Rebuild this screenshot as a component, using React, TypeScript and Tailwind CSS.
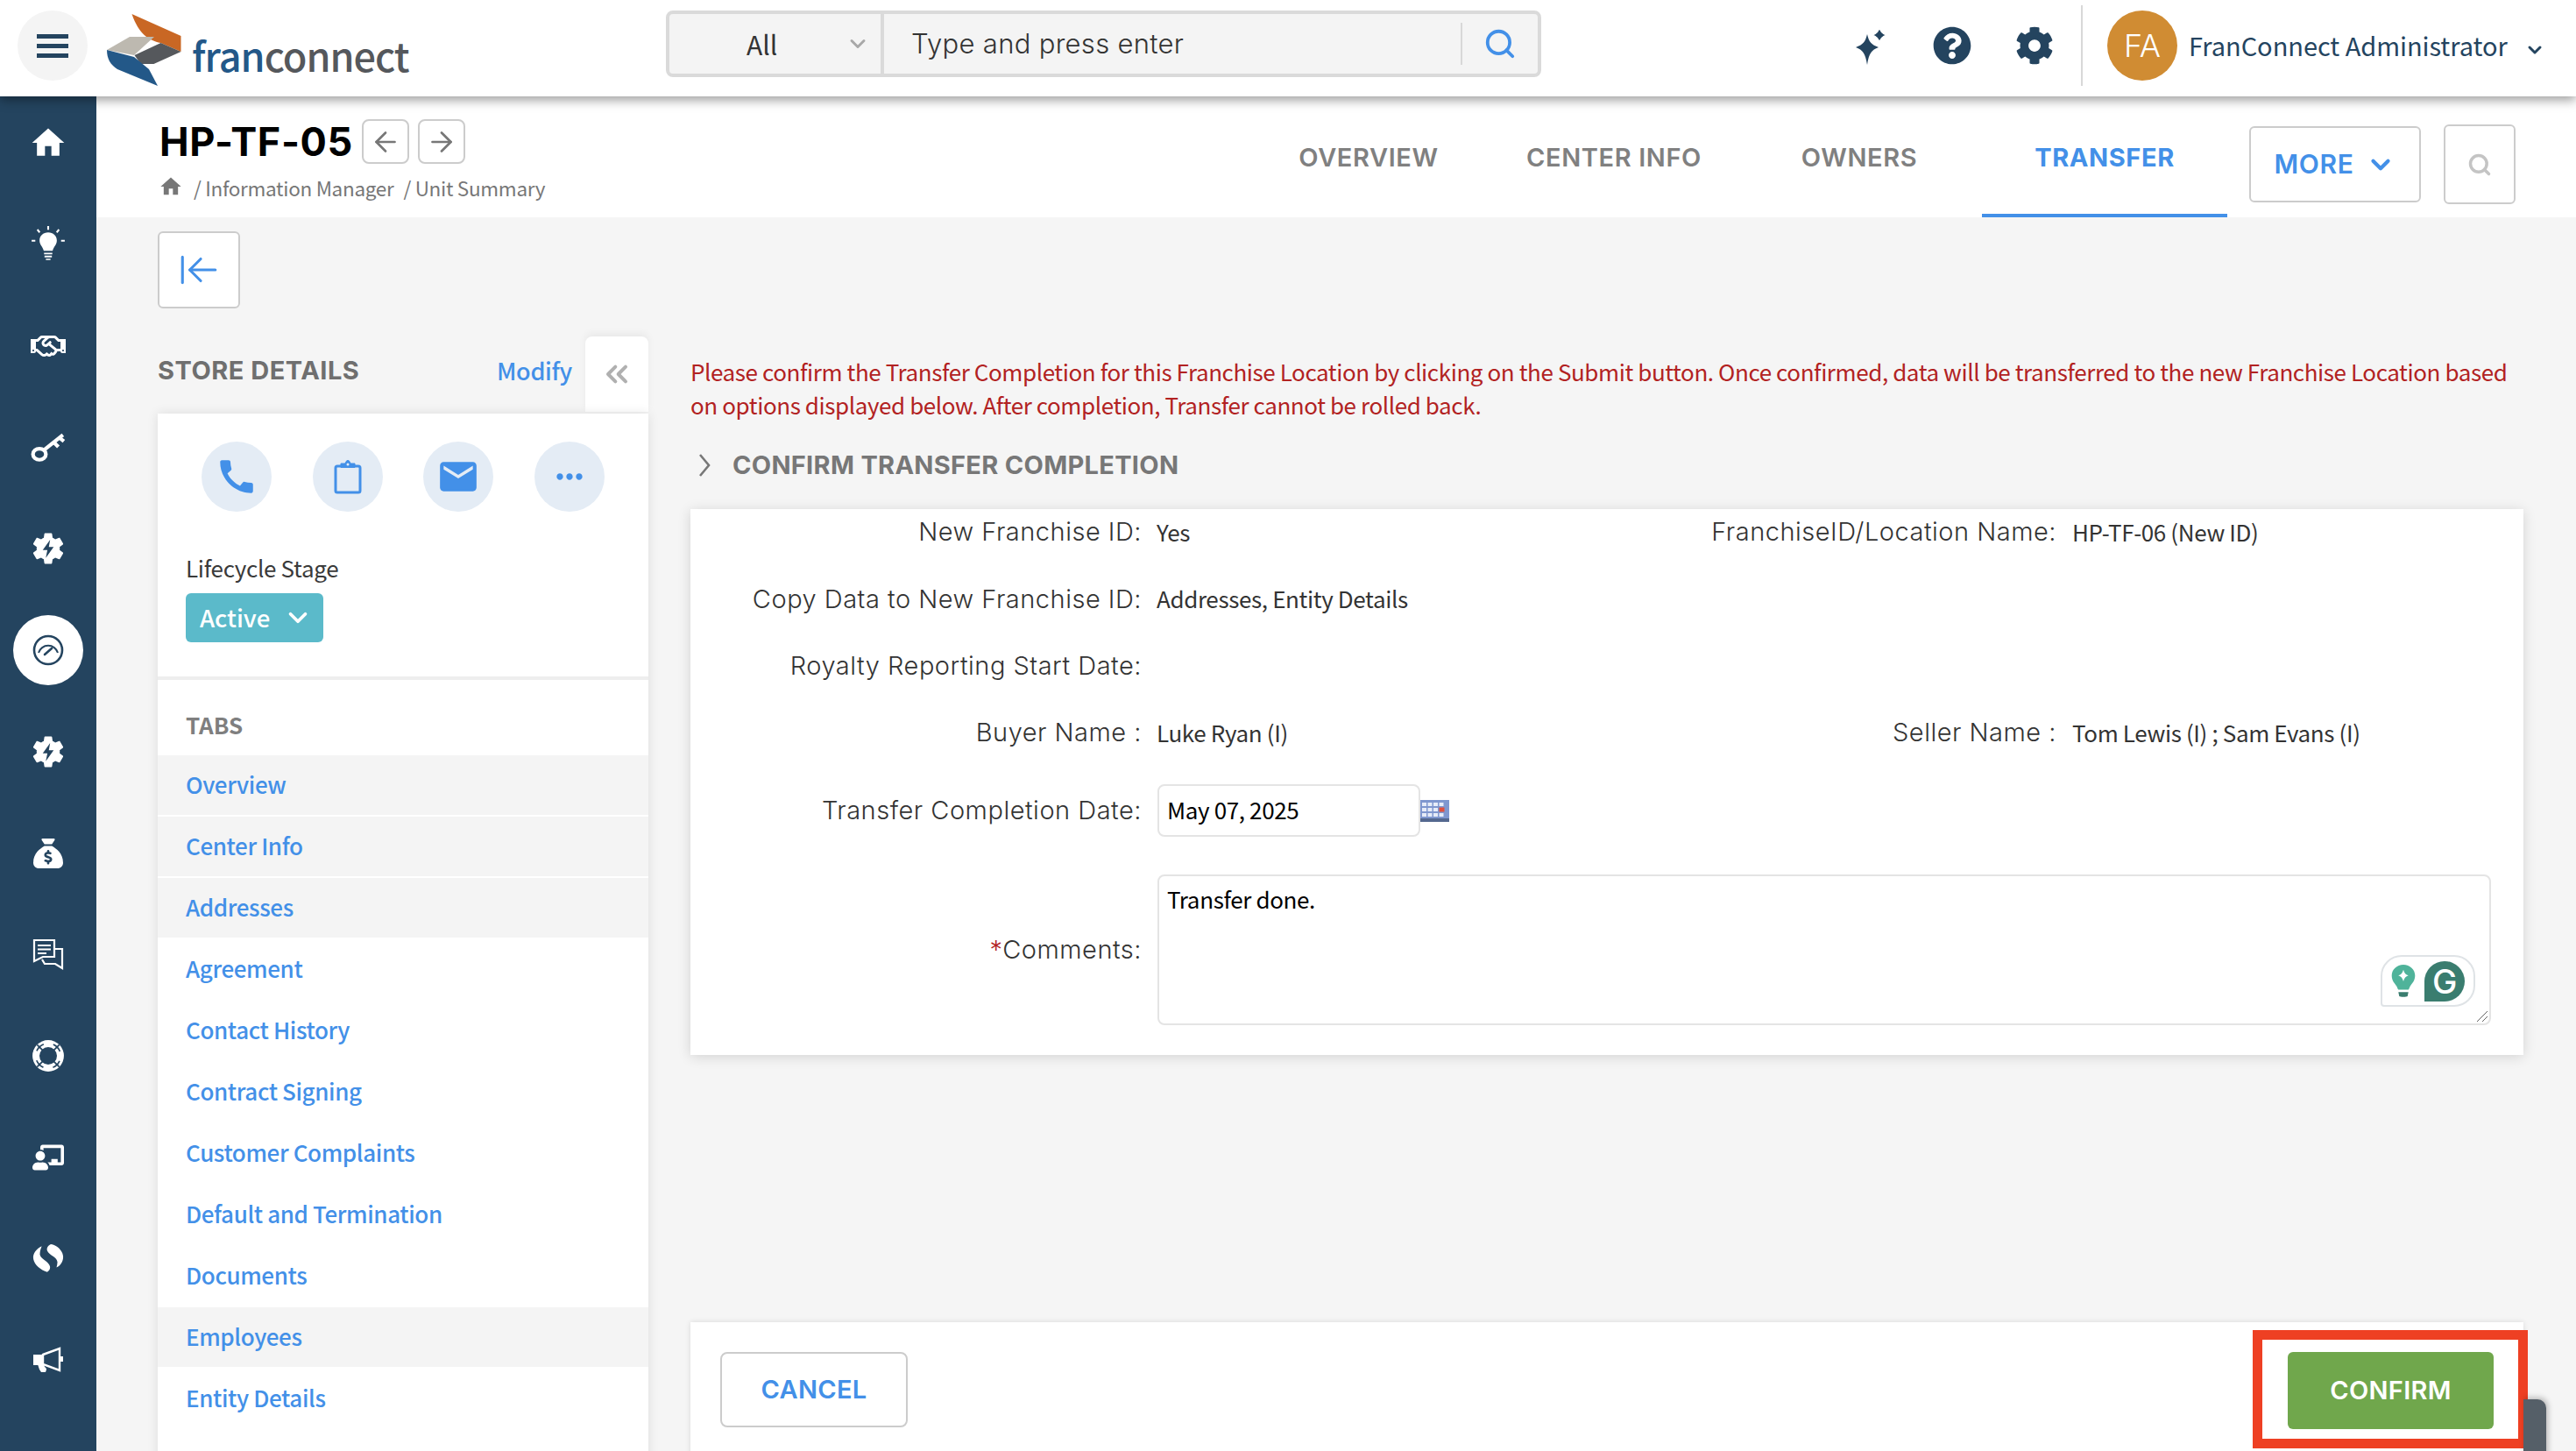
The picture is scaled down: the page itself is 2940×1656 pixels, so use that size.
import { ArrowLeft, ArrowLeftToLine, ArrowRight, ChevronDown, ChevronsLeft, Search } from "lucide-react";
import { FaChalkboardTeacher, FaCog, FaQuestionCircle, FaRegHandshake } from "react-icons/fa";
import { FaSackDollar } from "react-icons/fa6";
import { MdCall, MdEmail, MdHome, MdMoreHoriz } from "react-icons/md";

const source = "font-['Noto_Sans_CJK_SC','Source_Sans_3',sans-serif]";
const mont = "font-['Inter',sans-serif]";

const gearPath =
  "M19.14 12.94c.04-.3.06-.61.06-.94 0-.32-.02-.64-.07-.94l2.03-1.58c.18-.14.23-.41.12-.61l-1.92-3.32c-.12-.22-.37-.29-.59-.22l-2.39.96c-.5-.38-1.03-.7-1.62-.94l-.36-2.54c-.04-.24-.24-.41-.48-.41h-3.84c-.24 0-.43.17-.47.41l-.36 2.54c-.59.24-1.13.57-1.62.94l-2.39-.96c-.22-.08-.47 0-.59.22L2.74 8.87c-.12.21-.08.47.12.61l2.03 1.58c-.05.3-.09.63-.09.94s.02.64.07.94l-2.03 1.58c-.18.14-.23.41-.12.61l1.92 3.32c.12.22.37.29.59.22l2.39-.96c.5.38 1.03.7 1.62.94l.36 2.54c.05.24.24.41.48.41h3.84c.24 0 .44-.17.47-.41l.36-2.54c.59-.24 1.13-.56 1.62-.94l2.39.96c.22.08.47 0 .59-.22l1.92-3.32c.12-.22.07-.47-.12-.61l-2.01-1.58z";

function BoltGear() {
  return (
    <svg viewBox="0 0 24 24" className="w-[44px] h-[44px]">
      <path d={gearPath} fill="#fff" />
      <path d="M13.200 6.500 8.600 13h2.900l-1 4.800 4.900-6.800h-3z" fill="#24445f" />
    </svg>
  );
}

function Bulb() {
  return (
    <svg viewBox="0 0 36 40" className="w-[38px] h-[42px]" fill="#fff">
      <path d="M18 7c-5.500 0-9.400 3.800-9.400 8.600 0 4.600 3.600 6.800 4.600 11.400h9.600c1-4.600 4.600-6.800 4.600-11.400C27.400 10.800 23.500 7 18 7z" />
      <path d="M13.500 29h9v1.800h-9zM14 32.200h8V34h-8zM15.500 35.400h5V37h-5z" />
      <path d="M17 0h2v4h-2zM0 15h4v2H0zM32 15h4v2h-4z" />
      <path d="m5.500 4.500 1.500-1.300 2.500 3-1.500 1.300zM30.500 4.500 29 3.200l-2.500 3 1.500 1.300z" />
    </svg>
  );
}

function KeyIcon() {
  return (
    <svg viewBox="0 0 38 36" className="w-[40px] h-[38px]" fill="none" stroke="#fff" strokeWidth="4">
      <ellipse cx="9.500" cy="26" rx="7" ry="6" />
      <path d="M15 21 35 5" />
      <path d="m25 13 5 5M31 8l5 4" />
    </svg>
  );
}

function ChatIcon() {
  return (
    <svg viewBox="0 0 36 36" className="w-[36px] h-[36px]" fill="none" stroke="#fff" strokeWidth="2.200">
      <path d="M2 2h23v19H12l-10 5z" />
      <path d="M6 8h15M6 12.500h15M6 17h10" strokeWidth="1.800" />
      <path d="M25 12h9v22l-8-5H14l-3-5" />
    </svg>
  );
}

function RingIcon() {
  return (
    <svg viewBox="0 0 36 36" className="w-[38px] h-[38px]">
      <circle cx="18" cy="18" r="17" fill="#fff" />
      <circle cx="18" cy="18" r="9.500" fill="#24445f" />
      <circle cx="18" cy="18" r="13.500" fill="none" stroke="#24445f" strokeWidth="1.600" strokeDasharray="10.600 10.600" strokeDashoffset="5.300" transform="rotate(45 18 18)" />
      <path d="m6 6 6 6M30 6l-6 6M6 30l6-6M30 30l-6-6" stroke="#24445f" strokeWidth="1.600" />
    </svg>
  );
}

function SplitCircle() {
  return (
    <svg viewBox="0 0 36 36" className="w-[38px] h-[38px]" fill="#fff">
      <path d="M11 4C5 7 1 12 2 18c1 6 8 12 15 14 3-2 4-5 2-8-3-5-9-6-10-11 0-4 1-6 2-9z" />
      <path d="M21 2c-3 1-5 4-4 7 2 5 10 6 11 12 0 2-.500 4-1 6 5-2 8-8 7-13-1-6-7-11-13-12z" />
    </svg>
  );
}

function Megaphone() {
  return (
    <svg viewBox="0 0 38 36" className="w-[38px] h-[36px]">
      <path d="M2 11h11v12H2z" fill="#fff" />
      <path d="M7 22h7l1 3c2 1 2 3 2 3l-1 3h-5l-2-3z" fill="#fff" />
      <path d="m13 11 19-7v25l-19-7z" fill="none" stroke="#fff" strokeWidth="2.400" />
      <path d="M32 13h4v6h-4z" fill="#fff" />
    </svg>
  );
}

function GaugeIcon() {
  return (
    <svg viewBox="0 0 36 36" className="w-[36px] h-[36px]" fill="none" stroke="#24445f">
      <circle cx="18" cy="18" r="16" strokeWidth="2.600" />
      <path d="M7 21a11.500 11.500 0 0 1 22 0" strokeWidth="2" />
      <path d="m14 23 8-7" strokeWidth="2.600" strokeLinecap="round" />
    </svg>
  );
}

function Logo() {
  return (
    <svg viewBox="121 17 88 82" className="w-[88px] h-[82px]">
      <path d="M150.500 17 206.500 42v18l-23-10c-14-3-25-10-33-33z" fill="#c96724" />
      <path d="M122 58 148 43h28l-23 21z" fill="#bdb9b0" />
      <path d="M183.500 50 206.500 60l-31 14h-15l-7-10z" fill="#55585c" />
      <path d="M122 58 153 66l17 14 10 19-46-19c-8-5-12-12-12-22z" fill="#235888" />
    </svg>
  );
}

function CalendarIcon() {
  return (
    <svg viewBox="0 0 33 25" className="w-[33px] h-[25px] shrink-0">
      <rect width="33" height="25" fill="#7f97cf" />
      <rect y="21" width="33" height="4" fill="#54688f" />
      <g fill="#e6ecf8">
        <rect x="2" y="3" width="5" height="4" />
        <rect x="8.500" y="3" width="5" height="4" />
        <rect x="15" y="3" width="5" height="4" />
        <rect x="21.500" y="3" width="5" height="4" />
        <rect x="2" y="9" width="5" height="4" />
        <rect x="8.500" y="9" width="5" height="4" />
        <rect x="15" y="9" width="5" height="4" />
        <rect x="2" y="15" width="5" height="4" />
        <rect x="8.500" y="15" width="5" height="4" />
        <rect x="15" y="15" width="5" height="4" />
        <rect x="21.500" y="15" width="5" height="4" />
      </g>
      <rect x="21.500" y="8.500" width="6" height="5" fill="#e0503c" />
    </svg>
  );
}

function Clipboard() {
  return (
    <svg viewBox="0 0 32 40" className="w-[32px] h-[40px]" fill="none" stroke="#4390e8" strokeWidth="3">
      <rect x="2" y="8" width="28" height="30" rx="2" />
      <path d="M8 9.500h16V5h-5c-.500-2-1.500-3.500-3-3.500S13.500 3 13 5H8z" fill="#4390e8" strokeWidth="1" />
      <circle cx="16" cy="6" r="1.500" fill="#e4ecf5" stroke="none" />
    </svg>
  );
}

function Sparkle() {
  return (
    <svg viewBox="0 0 41 43" className="w-[41px] h-[43px] shrink-0" fill="#24445f">
      <path d="M17 8c2 9 5 12 13 15-8 3-11 7-13 20-2-13-5-17-13-20 8-3 11-6 13-15z" />
      <path d="M31 0c1 5 3 7 8 9-5 2-7 4-8 9-1-5-3-7-8-9 5-2 7-4 8-9z" stroke="#fff" strokeWidth="1.500" />
    </svg>
  );
}

const sideIcons = [
  <MdHome key="home" className="w-[44px] h-[44px] text-white" />,
  <Bulb key="bulb" />,
  <FaRegHandshake key="hands" className="w-[40px] h-[40px] text-white" />,
  <KeyIcon key="key" />,
  <BoltGear key="gear" />,
  <GaugeIcon key="gauge" />,
  <BoltGear key="gear2" />,
  <FaSackDollar key="bag" className="w-[34px] h-[38px] text-white" />,
  <ChatIcon key="chat" />,
  <RingIcon key="ring" />,
  <FaChalkboardTeacher key="teach" className="w-[36px] h-[34px] text-white" />,
  <SplitCircle key="split" />,
  <Megaphone key="mega" />,
];

const tabs = [
  { name: "Overview", shaded: true },
  { name: "Center Info", shaded: true },
  { name: "Addresses", shaded: true },
  { name: "Agreement" },
  { name: "Contact History" },
  { name: "Contract Signing" },
  { name: "Customer Complaints" },
  { name: "Default and Termination" },
  { name: "Documents" },
  { name: "Employees", shaded: true },
  { name: "Entity Details" },
];

function Label({ children, className = "" }: { children: React.ReactNode; className?: string }) {
  return <span className={`${mont} text-[29px] tracking-[0.5px] font-light text-[#333] text-right ${className}`}>{children}</span>;
}

function Value({ children, className = "" }: { children?: React.ReactNode; className?: string }) {
  return <span className={`${source} -mt-[2px] text-[26px] tracking-[-0.37px] text-[#333] ${className}`}>{children}</span>;
}

export default function App() {
  return (
    <div className={`w-[2940px] h-[1656px] overflow-hidden flex flex-col bg-[#f5f5f5] ${source}`}>
      {/* Top bar */}
      <header className="relative z-20 h-[110px] shrink-0 bg-white flex items-center whitespace-nowrap shadow-[0_4px_12px_rgba(0,0,0,0.4)]">
        <button className="ml-[20px] w-[80px] h-[80px] shrink-0 -mt-[6px] rounded-full bg-[#f4f4f4] flex flex-col items-center justify-center gap-[6px]">
          <span className="w-[36px] h-[5px] bg-[#24445f]" />
          <span className="w-[36px] h-[5px] bg-[#24445f]" />
          <span className="w-[36px] h-[5px] bg-[#24445f]" />
        </button>
        <div className="ml-[21px] mt-[4px] shrink-0">
          <Logo />
        </div>
        <div className="ml-[10px] mt-[14px] w-[250px] shrink-0 text-[45px] leading-none font-medium tracking-[-1px]">
          <span className="text-[#235888]">fran</span>
          <span className="text-[#55585c]">connect</span>
        </div>
        <div className="ml-[291px] -mt-[10px] w-[999px] h-[76px] shrink-0 flex rounded-[8px] border-4 border-[#dadada] bg-[#f4f4f4]">
          <div className="w-[245px] border-r-4 border-[#dadada] flex items-center">
            <span className="ml-[88px] text-[30px] text-[#333]">All</span>
            <ChevronDown className="ml-[78px] w-[28px] h-[28px] text-[#a8a8a8]" strokeWidth={2.5} />
          </div>
          <div className={`${mont} flex-1 flex items-center pl-[31px] text-[31px] tracking-[0.3px] font-light text-[#333]`}>Type and press enter</div>
          <div className="my-[10px] border-l-2 border-[#d8d8d8] w-[88px] flex items-center justify-center">
            <Search className="w-[38px] h-[38px] text-[#4390e8]" strokeWidth={2.4} />
          </div>
        </div>
        <div className="ml-[355px] -mt-[6px]">
          <Sparkle />
        </div>
        <FaQuestionCircle className="ml-[51px] -mt-[6px] w-[44px] h-[44px] shrink-0 text-[#24445f]" />
        <FaCog className="ml-[50px] -mt-[6px] w-[44px] h-[44px] shrink-0 text-[#24445f]" />
        <div className="ml-[31px] w-[2px] h-[92px] shrink-0 -mt-[6px] bg-[#d8d8d8]" />
        <div className={`${mont} ml-[28px] -mt-[6px] w-[80px] h-[80px] shrink-0 rounded-full bg-[#d08c33] text-white text-[36px] font-light flex items-center justify-center`}>FA</div>
        <span className="ml-[13px] -mt-[6px] text-[29px] tracking-[-0.05px] text-[#24445f]">FranConnect Administrator</span>
        <ChevronDown className="ml-[19px] mt-[4px] w-[24px] h-[24px] shrink-0 text-[#24445f]" strokeWidth={3} />
      </header>

      <div className="flex-1 flex min-h-0">
        {/* Icon rail */}
        <nav className="w-[110px] shrink-0 bg-[#24445f] flex flex-col items-center pt-[13px] gap-[35.8px]">
          {sideIcons.map((icon, i) => (
            <div key={i} className={`w-[80px] h-[80px] shrink-0 rounded-full flex items-center justify-center ${i === 5 ? "bg-white" : ""}`}>
              {icon}
            </div>
          ))}
        </nav>

        <main className="flex-1 flex flex-col min-w-0">
          {/* Title row */}
          <div className="h-[138px] shrink-0 bg-white flex whitespace-nowrap">
            <div className="w-[1312px] shrink-0 pl-[72px] pt-[26px]">
              <div className="flex items-start gap-[10px]">
                <h1 className={`${mont} text-[45px] leading-[52px] font-bold text-black tracking-[0.6px]`}>HP-TF-05</h1>
                <button className="w-[54px] h-[51px] rounded-[8px] border-2 border-[#ccc] flex items-center justify-center">
                  <ArrowLeft className="w-[36px] h-[36px] text-[#777]" strokeWidth={1.8} />
                </button>
                <button className="w-[54px] h-[51px] rounded-[8px] border-2 border-[#ccc] flex items-center justify-center">
                  <ArrowRight className="w-[36px] h-[36px] text-[#777]" strokeWidth={1.8} />
                </button>
              </div>
              <div className="flex items-center mt-[10px] text-[22.500px] tracking-[-0.3px] text-[#777]">
                <MdHome className="w-[28px] h-[28px] text-[#777] -ml-[1px] -mt-[4px]" />
                <span className="ml-[12px]">/ Information Manager</span>
                <span className="ml-[11px]">/ Unit Summary</span>
              </div>
            </div>
            <div className={`${mont} flex text-[29px] tracking-[0.6px] font-semibold text-[#808080]`}>
              {["OVERVIEW", "CENTER INFO", "OWNERS"].map((t) => (
                <div key={t} className="w-[280px] flex items-center justify-center pt-[6px] border-b-4 border-transparent">{t}</div>
              ))}
              <div className="w-[280px] flex items-center justify-center pt-[6px] border-b-4 border-[#4390e8] text-[#4390e8] font-bold">TRANSFER</div>
            </div>
            <button className={`${mont} ml-[25px] mt-[34px] w-[196px] h-[87px] rounded-[6px] border-2 border-[#ccc] flex items-center justify-center gap-[14px] text-[30px] tracking-[0.6px] font-semibold text-[#4390e8]`}>
              MORE
              <ChevronDown className="w-[34px] h-[34px]" strokeWidth={3} />
            </button>
            <button className="ml-[26px] mt-[32px] w-[82px] h-[91px] rounded-[6px] border-2 border-[#ccc] flex items-center justify-center">
              <Search className="w-[28px] h-[28px] text-[#c4c4c4]" strokeWidth={3} />
            </button>
          </div>

          {/* Page body */}
          <div className="flex-1 min-h-0 overflow-hidden pl-[70px] pt-[16px]">
            <button className="w-[94px] h-[88px] rounded-[6px] border-2 border-[#ccc] bg-white flex items-center justify-center">
              <ArrowLeftToLine className="w-[50px] h-[50px] text-[#4390e8]" strokeWidth={1.5} />
            </button>

            <div className="flex gap-[48px] mt-[32px]">
              {/* Store details */}
              <aside className="w-[560px] shrink-0 flex flex-col whitespace-nowrap">
                <div className="h-[88px] flex">
                  <div className="flex-1 flex items-center justify-between pb-[10px] pr-[15px]">
                    <span className={`${mont} text-[29px] tracking-[0.5px] font-bold text-[#6f6f6f]`}>STORE DETAILS</span>
                    <span className="text-[27px] tracking-[-0.3px] font-medium text-[#4390e8]">Modify</span>
                  </div>
                  <div className="w-[72px] h-[86px] rounded-t-[8px] bg-white flex items-center justify-center shadow-[0_-4px_8px_rgba(0,0,0,0.05)]">
                    <ChevronsLeft className="w-[40px] h-[40px] text-[#b0b0b0]" strokeWidth={2.4} />
                  </div>
                </div>
                <div className="bg-white pb-[60px] shadow-[0_0_12px_rgba(0,0,0,0.1)]">
                  <div className="h-[304px] border-b-4 border-[#eeeeee] px-[32px] pt-[32px]">
                    <div className="flex justify-between pl-[18px] pr-[18px] gap-[46px]">
                      <div className="w-[80px] h-[80px] rounded-full bg-[#e4ecf5] flex items-center justify-center">
                        <MdCall className="w-[50px] h-[50px] text-[#4390e8]" />
                      </div>
                      <div className="w-[80px] h-[80px] rounded-full bg-[#e4ecf5] flex items-center justify-center">
                        <Clipboard />
                      </div>
                      <div className="w-[80px] h-[80px] rounded-full bg-[#e4ecf5] flex items-center justify-center">
                        <MdEmail className="w-[50px] h-[50px] text-[#4390e8]" />
                      </div>
                      <div className="w-[80px] h-[80px] rounded-full bg-[#e4ecf5] flex items-center justify-center">
                        <MdMoreHoriz className="w-[44px] h-[44px] text-[#4390e8]" />
                      </div>
                    </div>
                    <div className="mt-[46px] text-[26px] tracking-[-0.3px] leading-[36px] text-[#3a3a3a]">Lifecycle Stage</div>
                    <div className="mt-[11px] w-[157px] h-[56px] rounded-[6px] bg-[#5bbaca] flex items-center pl-[16px] gap-[15px] text-[27.500px] font-medium text-white">
                      Active
                      <ChevronDown className="w-[34px] h-[34px]" strokeWidth={2.6} />
                    </div>
                  </div>
                  <div className="h-[86px] px-[32px] pt-[14px] flex items-center text-[26px] font-bold text-[#7f7f7f]">TABS</div>
                  {tabs.map((t) => (
                    <div key={t.name} className={`h-[70px] px-[32px] pb-[3px] flex items-center border-b-2 border-white text-[26px] tracking-[-0.38px] font-medium text-[#4390e8] ${t.shaded ? "bg-[#f4f4f4]" : ""}`}>
                      {t.name}
                    </div>
                  ))}
                </div>
              </aside>

              {/* Transfer form */}
              <section className="w-[2092px] shrink-0 pt-[21px] whitespace-nowrap">
                <p className="text-[26px] leading-[38px] tracking-[-0.41px] text-[#b22222]">
                  Please confirm the Transfer Completion for this Franchise Location by clicking on the Submit button. Once confirmed, data will be transferred to the new Franchise Location based
                  <br />
                  on options displayed below. After completion, Transfer cannot be rolled back.
                </p>
                <div className="mt-[30px] h-[40px] flex items-center">
                  <svg viewBox="0 0 16 26" className="ml-[8px] w-[16px] h-[26px]" fill="none" stroke="#777" strokeWidth="2.600">
                    <path d="m3 1 10 12L3 25" />
                  </svg>
                  <span className={`${mont} ml-[24px] text-[29px] tracking-[0.3px] font-bold text-[#777]`}>CONFIRM TRANSFER COMPLETION</span>
                </div>
                <div className="mt-[30px] h-[623px] bg-white pt-[6px] flex flex-col shadow-[0_2px_14px_rgba(0,0,0,0.14)]">
                  <div className="flex items-center h-[40px]">
                    <Label className="w-[515px]">New Franchise ID:</Label>
                    <Value className="ml-[17px] w-[400px]">Yes</Value>
                    <Label className="w-[627px]">FranchiseID/Location Name:</Label>
                    <Value className="ml-[18px]">HP-TF-06 (New ID)</Value>
                  </div>
                  <div className="flex items-center h-[40px] mt-[36.400px]">
                    <Label className="w-[515px]">Copy Data to New Franchise ID:</Label>
                    <Value className="ml-[17px]">Addresses, Entity Details</Value>
                  </div>
                  <div className="flex items-center h-[40px] mt-[36.400px]">
                    <Label className="w-[515px]">Royalty Reporting Start Date:</Label>
                  </div>
                  <div className="flex items-center h-[40px] mt-[36.400px]">
                    <Label className="w-[515px]">Buyer Name :</Label>
                    <Value className="ml-[17px] w-[400px]">Luke Ryan (I)</Value>
                    <Label className="w-[627px]">Seller Name :</Label>
                    <Value className="ml-[18px]">Tom Lewis (I) ; Sam Evans (I)</Value>
                  </div>
                  <div className="flex items-center h-[60px] mt-[39px]">
                    <Label className="w-[515px]">Transfer Completion Date:</Label>
                    <div className="ml-[18px] w-[300px] h-[60px] rounded-[8px] border-2 border-[#e4e4e4] flex items-center pl-[9px] pb-[3px] text-[26px] tracking-[-0.37px] text-black">May 07, 2025</div>
                    <CalendarIcon />
                  </div>
                  <div className="flex items-center mt-[43px]">
                    <Label className="w-[515px]">
                      <span className="text-[#b22222]">*</span>Comments:
                    </Label>
                    <div className="relative ml-[18px] w-[1522px] h-[172px] rounded-[8px] border-2 border-[#e4e4e4] pl-[9px] pt-[8px] text-[26px] tracking-[-0.37px] leading-[36px] text-black">
                      Transfer done.
                      <div className="absolute right-[16px] bottom-[19px] w-[108px] h-[59px] rounded-[24px] rounded-bl-[4px] border-2 border-[#dfe3e6] bg-white flex items-center justify-center gap-[10px]">
                        <svg viewBox="0 0 28 40" className="w-[28px] h-[38px]">
                          <path d="M14 0C6 0 0 6 0 13c0 6 3 9 6 13 1 2 1 3 2 4h12c1-1 1-2 2-4 3-4 6-7 6-13 0-7-6-13-14-13z" fill="#4fb39a" />
                          <path d="M14 6c1 4 3 6 6 7-3 1-5 3-6 7-1-4-3-6-6-7 3-1 5-3 6-7z" fill="#fff" />
                          <path d="M8 33h12l-1 5c-1 1-9 1-10 0z" fill="#3a7d6f" />
                        </svg>
                        <div className={`${mont} w-[46px] h-[46px] rounded-full rounded-bl-none bg-[#3a7d6f] text-white text-[38px] font-medium flex items-center justify-center`}>G</div>
                      </div>
                      <svg viewBox="0 0 14 14" className="absolute right-[1px] bottom-[1px] w-[14px] h-[14px]" stroke="#666" strokeWidth="1">
                        <path d="M1 13 13 1M7 13l6-6" />
                      </svg>
                    </div>
                  </div>
                </div>
                <div className="relative mt-[305px] h-[200px] bg-white flex items-start justify-between px-[34px] pt-[34px] shadow-[0_0_6px_rgba(0,0,0,0.12)]">
                  <button className={`${mont} w-[214px] h-[86px] rounded-[8px] border-2 border-[#ccc] bg-white text-[29px] tracking-[0.3px] font-semibold text-[#4390e8]`}>CANCEL</button>
                  <div className="relative">
                    <button className={`${mont} w-[235px] h-[88px] rounded-[6px] bg-[#70a74c] text-[29px] tracking-[0.3px] font-semibold text-white`}>CONFIRM</button>
                    <div className="absolute -left-[40px] -right-[39px] -top-[25px] -bottom-[22px] border-[11px] border-[#ee4023]" />
                  </div>
                  <div className="absolute left-[2092px] top-[88px] w-[26px] h-[80px] rounded-tr-[10px] bg-[#555f68] shadow-[2px_-2px_6px_rgba(0,0,0,0.25)]" />
                </div>
              </section>
            </div>
          </div>
        </main>
      </div>
    </div>
  );
}
